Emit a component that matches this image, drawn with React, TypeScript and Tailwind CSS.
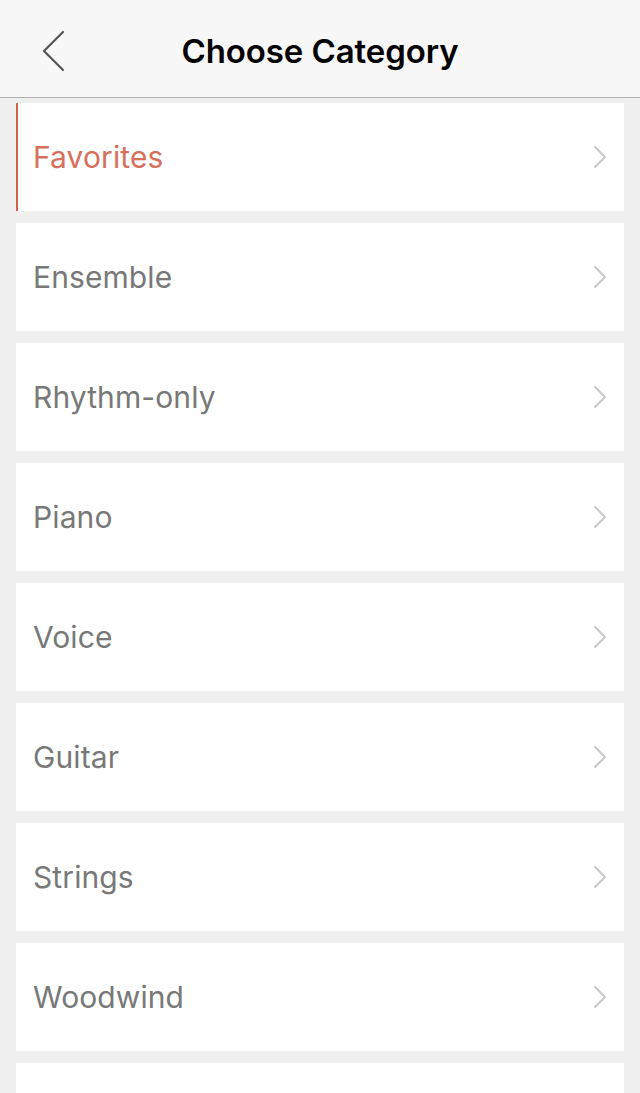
import React from "react";

const items = [
  "Favorites",
  "Ensemble",
  "Rhythm-only",
  "Piano",
  "Voice",
  "Guitar",
  "Strings",
  "Woodwind",
];

function Chevron() {
  return (
    <svg width="14" height="22" viewBox="0 0 14 22" className="shrink-0">
      <path d="M2 1 L12 11 L2 21" fill="none" stroke="#c8c8c8" strokeWidth="2" strokeLinecap="round" strokeLinejoin="round" />
    </svg>
  );
}

export default function App() {
  return (
    <div
      className="w-[640px] h-[1093px] overflow-hidden bg-[#efefef] flex flex-col"
      style={{ fontFamily: "Inter, 'Liberation Sans', sans-serif" }}
    >
      <header className="h-[98px] shrink-0 bg-[#f7f7f7] border-b border-[#b0b0b0] relative flex items-center justify-center">
        <button className="absolute left-[40px] top-[30px] w-[26px] h-[42px] flex items-center justify-center">
          <svg width="24" height="42" viewBox="0 0 24 42">
            <path d="M22 2 L3 21 L22 40" fill="none" stroke="#555555" strokeWidth="2.2" strokeLinecap="round" strokeLinejoin="round" />
          </svg>
        </button>
        <h1 className="text-[33px] font-semibold text-black tracking-[-0.1px] pt-[6px]">Choose Category</h1>
      </header>
      <div className="flex flex-col gap-[12px] px-[16px] pt-[5px]">
        {items.map((name, i) => (
          <div
            key={name}
            className={
              "h-[108px] shrink-0 bg-white flex items-center justify-between pr-[17px] " +
              (i === 0 ? "border-l-2 border-[#d2604e] pl-[15px]" : "pl-[17px]")
            }
          >
            <span
              className={
                "text-[30px] tracking-[0.1px] " + (i === 0 ? "text-[#d6705c]" : "text-[#787878]")
              }
            >
              {name}
            </span>
            <Chevron />
          </div>
        ))}
        <div className="h-[108px] shrink-0 bg-white" />
      </div>
    </div>
  );
}
